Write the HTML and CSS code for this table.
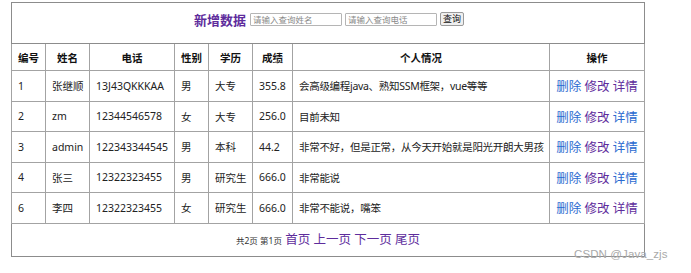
FILE: index.html
```html
<!DOCTYPE html>
<html lang="zh">
<head>
<meta charset="utf-8">
<title>学生列表</title>
<link rel="stylesheet" href="styles.css">
</head>
<body>
<div class="page">
  <table class="grid">
    <colgroup>
      <col class="c-id"><col class="c-name"><col class="c-tel"><col class="c-sex">
      <col class="c-edu"><col class="c-score"><col class="c-info"><col class="c-op">
    </colgroup>
    <tr class="toolbar">
      <td colspan="8">
        <div class="tools">
          <a class="add visited" href="#">新增数据</a>
          <input class="search" type="text" placeholder="请输入查询姓名">
          <input class="search" type="text" placeholder="请输入查询电话">
          <button class="btn" type="button">查询</button>
        </div>
      </td>
    </tr>
    <tr class="head">
      <th>编号</th><th>姓名</th><th>电话</th><th>性别</th><th>学历</th><th>成绩</th><th>个人情况</th><th>操作</th>
    </tr>
    <tr class="row">
      <td>1</td><td>张继顺</td><td>13J43QKKKAA</td><td>男</td><td>大专</td><td>355.8</td><td class="info">会高级编程java、熟知SSM框架，vue等等</td>
      <td class="ops"><a class="link" href="#">删除</a> <a class="link visited" href="#">修改</a> <a class="link visited" href="#">详情</a></td>
    </tr>
    <tr class="row">
      <td>2</td><td>zm</td><td>12344546578</td><td>女</td><td>大专</td><td>256.0</td><td class="info">目前未知</td>
      <td class="ops"><a class="link" href="#">删除</a> <a class="link visited" href="#">修改</a> <a class="link" href="#">详情</a></td>
    </tr>
    <tr class="row">
      <td>3</td><td>admin</td><td>122343344545</td><td>男</td><td>本科</td><td>44.2</td><td class="info">非常不好，但是正常，从今天开始就是阳光开朗大男孩</td>
      <td class="ops"><a class="link" href="#">删除</a> <a class="link visited" href="#">修改</a> <a class="link" href="#">详情</a></td>
    </tr>
    <tr class="row">
      <td>4</td><td>张三</td><td>12322323455</td><td>男</td><td>研究生</td><td>666.0</td><td class="info">非常能说</td>
      <td class="ops"><a class="link" href="#">删除</a> <a class="link visited" href="#">修改</a> <a class="link" href="#">详情</a></td>
    </tr>
    <tr class="row">
      <td>6</td><td>李四</td><td>12322323455</td><td>女</td><td>研究生</td><td>666.0</td><td class="info">非常不能说，嘴笨</td>
      <td class="ops"><a class="link" href="#">删除</a> <a class="link visited" href="#">修改</a> <a class="link visited" href="#">详情</a></td>
    </tr>
    <tr class="pager">
      <td colspan="8">
        <span class="count">共2页 第1页</span>
        <a class="link visited" href="#">首页</a>
        <a class="link visited" href="#">上一页</a>
        <a class="link visited" href="#">下一页</a>
        <a class="link visited" href="#">尾页</a>
      </td>
    </tr>
  </table>
  <div class="watermark">CSDN @Java_zjs</div>
</div>
</body>
</html>
```
FILE: styles.css
```css
html, body {
  margin: 0;
  padding: 0;
  background: #ffffff;
}
body {
  font-family: "Noto Sans", "Noto Sans CJK SC", sans-serif;
  color: #222222;
}
.page {
  position: relative;
  width: 691px;
  height: 273px;
  padding: 2px 0 0 11px;
  box-sizing: border-box;
}
.grid {
  width: 634px;
  table-layout: fixed;
  border-collapse: collapse;
  border: 1px solid #8c8c8c;
  font-size: 10.5px;
}
.c-id { width: 34px; }
.c-name { width: 44px; }
.c-tel { width: 85px; }
.c-sex { width: 34px; }
.c-edu { width: 44px; }
.c-score { width: 40px; }
.c-info { width: 257px; }
.c-op { width: 95px; }

.grid td, .grid th {
  border: 1px solid #a3a3a3;
  padding: 0 0 0 6px;
  white-space: nowrap;
  overflow: hidden;
}
.toolbar td {
  height: 40px;
  padding: 0;
  border-color: #8c8c8c;
}
.tools {
  display: flex;
  align-items: center;
  justify-content: center;
  gap: 3px;
  padding-bottom: 8px;
  padding-left: 2px;
}
.add {
  font-size: 13px;
  font-weight: bold;
  text-decoration: none;
  margin-right: 1px;
}
.search {
  width: 92px;
  height: 13px;
  box-sizing: border-box;
  border: 1px solid #b5b5b5;
  border-radius: 1px;
  padding: 0 2px;
  font-family: "Noto Sans CJK SC", sans-serif;
  font-size: 8.5px;
  line-height: 11px;
  margin: 0;
}
.search::placeholder {
  color: #8a8a8a;
}
.btn {
  height: 14px;
  padding: 0 2px;
  margin: 0;
  border: 1px solid #9a9a9a;
  border-radius: 2px;
  background: #efefef;
  font-family: "Noto Sans CJK SC", sans-serif;
  font-size: 9px;
  line-height: 12px;
  color: #111111;
}
.head th {
  height: 26px;
  padding: 0;
  text-align: center;
  font-weight: bold;
  font-size: 10.5px;
  color: #111111;
}
.row td {
  height: 29.5px;
  font-size: 10.5px;
}
.grid .info {
  letter-spacing: -0.3px;
}
.grid .ops {
  padding: 0;
  text-align: center;
  font-size: 12.5px;
}
.link {
  text-decoration: none;
  color: #2a6ad0;
}
.link.visited, .add.visited {
  color: #5e2c9c;
}
.pager td {
  height: 29px;
  padding: 0 0 3px 0;
  text-align: center;
  font-size: 12.5px;
  border-color: #8c8c8c;
}
.count {
  font-size: 8.5px;
  color: #333333;
}
.watermark {
  position: absolute;
  left: 574px;
  top: 248px;
  font-family: "Liberation Sans", sans-serif;
  font-size: 11.5px;
  color: #a9a9a9;
  letter-spacing: 0.1px;
}
```
